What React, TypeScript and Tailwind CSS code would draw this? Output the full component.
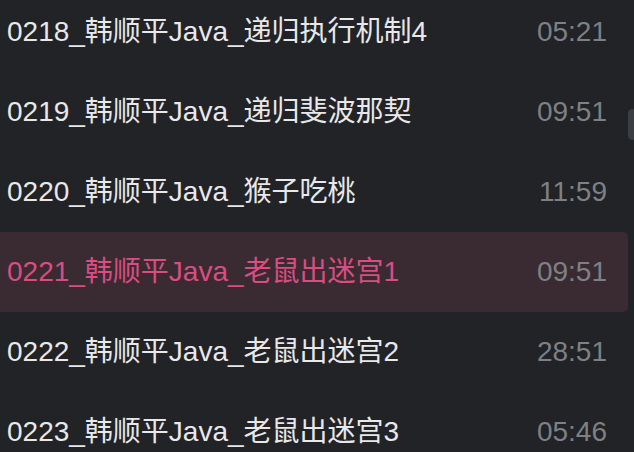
const lessons = [
  { title: '0218_韩顺平Java_递归执行机制4', time: '05:21' },
  { title: '0219_韩顺平Java_递归斐波那契', time: '09:51' },
  { title: '0220_韩顺平Java_猴子吃桃', time: '11:59' },
  { title: '0221_韩顺平Java_老鼠出迷宫1', time: '09:51', active: true },
  { title: '0222_韩顺平Java_老鼠出迷宫2', time: '28:51' },
  { title: '0223_韩顺平Java_老鼠出迷宫3', time: '05:46' },
];

export default function App() {
  return (
    <div
      className="relative w-[634px] h-[452px] overflow-hidden bg-[#212326]"
      style={{ fontFamily: '"Liberation Sans", "Noto Sans CJK SC", sans-serif' }}
    >
      {/* playlist, scrolled a little */}
      <ul className="-mt-2 w-[628px]">
        {lessons.map((l) => (
          <li
            key={l.title}
            className={`flex items-center justify-between h-20 pl-[7px] pr-[21px] rounded-r-[5px] text-[28px] ${
              l.active ? 'bg-[#3a2b33]' : ''
            }`}
          >
            <span className={l.active ? 'text-[#d94d80]' : 'text-[#e8e8ea]'}>{l.title}</span>
            <span className="text-[#7d8085]">{l.time}</span>
          </li>
        ))}
      </ul>

      {/* scrollbar thumb */}
      <div className="absolute right-[-3px] top-[109px] w-[9px] h-[31px] rounded-full bg-[#3b3e42]" />
    </div>
  );
}
